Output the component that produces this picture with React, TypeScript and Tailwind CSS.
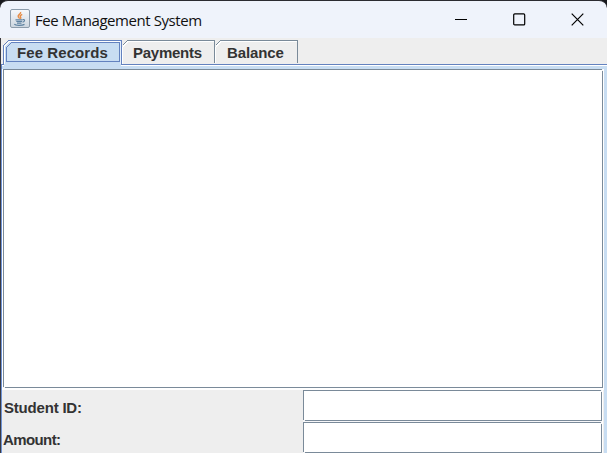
import React from "react";

function JavaIcon() {
  return (
    <svg width="20" height="20" viewBox="0 0 20 20" fill="none" className="shrink-0">
      <defs>
        <linearGradient id="tile" x1="0" y1="0" x2="0" y2="1">
          <stop offset="0" stopColor="#f7f9fb" />
          <stop offset="1" stopColor="#cbd5df" />
        </linearGradient>
      </defs>
      <rect x="0.5" y="0.5" width="19" height="18" rx="1.5" fill="url(#tile)" stroke="#8c9cab" />
      <path d="M10.6 3C11.3 5 7.5 5.7 8.2 7.5C8.5 8.5 9.4 8.8 9.6 9.7M12.2 5.3C10 6.4 9.7 7.2 10.7 8.2C11 8.8 10.7 9.3 10.3 9.7" stroke="#e78b43" strokeWidth="1.4" />
      <path d="M5.5 10.8H12.5M6.3 12.5H12M7 14.2H11.5M12.8 10.6C15.3 10 15 12.8 12.5 13.2M4.3 15.2C5.5 16.7 12 16.7 14.5 15.4" stroke="#5e82a1" strokeWidth="1.2" />
    </svg>
  );
}

function TitleBar() {
  return (
    <header className="flex h-[38px] shrink-0 items-center rounded-t-[8px] border-t border-[#2b2b30] bg-[#eff3fb] pb-px pl-[10px] pr-[23px]">
      <JavaIcon />
      <h1 className="ml-[5px] mt-px whitespace-nowrap font-['Open_Sans',sans-serif] text-[15px] leading-5 tracking-[-0.43px] text-[#111]">
        Fee Management System
      </h1>
      <div className="ml-auto flex items-center gap-[45px]">
        <svg width="13" height="13" shapeRendering="crispEdges"><path d="M0 6.5H12" stroke="#000" /></svg>
        <svg width="13" height="13" fill="none" stroke="#000" strokeWidth="1.2"><rect x="0.7" y="0.9" width="11" height="11" rx="1" /></svg>
        <svg width="13" height="13" fill="none" stroke="#000" strokeWidth="1.2"><path d="M0.7 0.7L12.3 12.3M12.3 0.7L0.7 12.3" /></svg>
      </div>
    </header>
  );
}

const tabText = "relative block whitespace-nowrap font-['Liberation_Sans',sans-serif] text-[15px] font-bold leading-[17px] text-[#333]";

function Tabs() {
  return (
    <nav className="flex h-[26px] shrink-0 bg-[#eeeeee]">
      <div className="relative h-[26px] w-[120px] pl-[16px] pt-[6px]">
        <svg className="absolute left-0 top-0" width="120" height="26" fill="none" shapeRendering="crispEdges">
          <path d="M3 26V8L9 3H120V26Z" fill="#c8ddf2" />
          <path d="M2.5 26V7.5L7.5 2.5H120" stroke="#6382bf" />
          <path d="M3.5 26V8.5L8.5 3.5H119" stroke="#fff" />
          <path d="M5.5 23.5V9.5L10.5 4.5H118.5V23.5Z" stroke="#6382bf" />
          <path d="M119.5 3V26" stroke="#e4eefa" />
        </svg>
        <span className={`${tabText} tracking-[0.08px]`}>Fee Records</span>
      </div>
      <div className="relative h-[26px] w-[94px] pl-[12px] pt-[6px]">
        <svg className="absolute left-0 top-0" width="94" height="26" fill="none" shapeRendering="crispEdges">
          <path d="M1.5 7.5L6.5 2.5H93.5V25" stroke="#7a8a99" />
          <path d="M1.5 9V26M2 8.5L7 3.5H93" stroke="#fff" />
          <path d="M0.5 2V26" stroke="#6382bf" />
        </svg>
        <span className={`${tabText} tracking-[-0.25px]`}>Payments</span>
      </div>
      <div className="relative h-[26px] w-[83px] pl-[12px] pt-[6px]">
        <svg className="absolute left-0 top-0" width="83" height="26" fill="none" shapeRendering="crispEdges">
          <path d="M0.5 7.5L5.5 2.5H82.5V25" stroke="#7a8a99" />
          <path d="M0.5 9V25M1 8.5L6 3.5H82" stroke="#fff" />
        </svg>
        <span className={`${tabText} tracking-[-0.1px]`}>Balance</span>
      </div>
    </nav>
  );
}

// Bevelled Metal border: the lower-left and upper-right corners stay open.
function Notches() {
  return (
    <>
      <span className="absolute bottom-0 left-0 h-px w-[2px] bg-[#f4f4f6]" />
      <span className="absolute right-0 top-0 h-[2px] w-px bg-[#f4f4f6]" />
    </>
  );
}

function Field({ label, id, inset }: { label: string; id: string; inset: string }) {
  return (
    <div className="flex h-8 shrink-0">
      <label htmlFor={id} className={`w-[301px] shrink-0 pt-[9px] font-['Liberation_Sans',sans-serif] text-[15px] font-bold leading-[17px] text-[#333] ${inset}`}>
        {label}
      </label>
      <div className="relative h-8 w-[299px] bg-[#f7f7f9] pb-px">
        <div className="relative h-[31px]">
          <input id={id} className="block h-[31px] w-[299px] border border-[#7a8a99] bg-white px-1 text-[15px] outline-none" />
          <Notches />
        </div>
      </div>
      <div className="w-px bg-white" />
    </div>
  );
}

export default function App() {
  return (
    <div className="flex h-[453px] w-[607px] flex-col overflow-hidden bg-[#18191d]">
      <TitleBar />
      <div className="flex min-h-0 grow flex-col border-l border-[#3a3a42] bg-[#eeeeee]">
        <Tabs />
        <div className="flex h-[5px] shrink-0">
          <div className="h-[5px] w-[3px] border-l border-t border-[#6382bf] bg-[#c8ddf2]"><div className="h-px bg-white" /></div>
          <div className="h-[5px] w-[117px] bg-[#c8ddf2]" />
          <div className="h-[5px] grow border-t border-[#6382bf] bg-[#c8ddf2]"><div className="h-px bg-white" /></div>
        </div>
        <div className="flex min-h-0 grow border-l border-l-[#6f94d6] bg-[#c8ddf2]">
          <main className="flex w-[602px] flex-col bg-[#eeeeee]">
            <div className="h-[321px] shrink-0 bg-white pl-px">
              <div className="relative h-[319px] w-[600px]">
                <textarea aria-label="Fee records" className="block h-[319px] w-[600px] resize-none border border-[#7a8a99] bg-white outline-none" />
                <Notches />
              </div>
            </div>
            <Field id="student-id" label="Student ID:" inset="pl-[2px] tracking-[-0.2px]" />
            <Field id="amount" label="Amount:" inset="pl-[1px] tracking-[-0.6px]" />
          </main>
        </div>
      </div>
    </div>
  );
}
